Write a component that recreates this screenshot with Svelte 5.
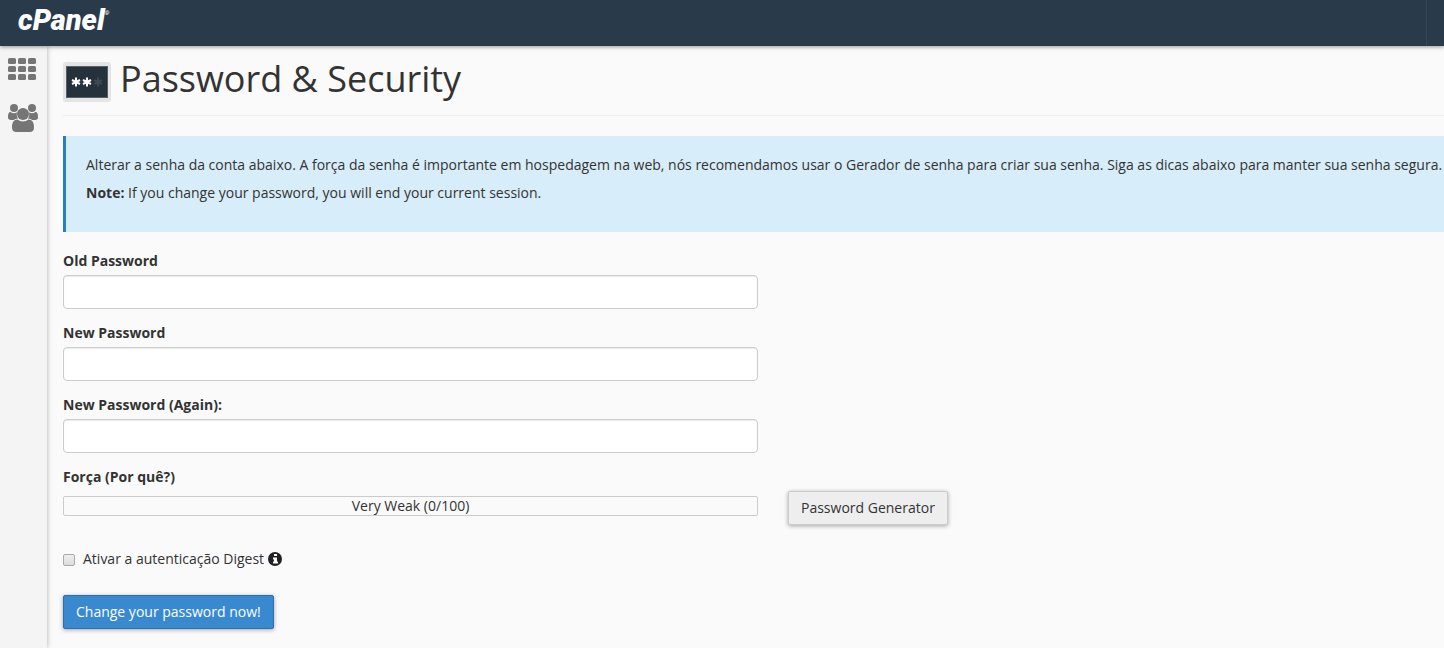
<script>
  let oldPassword = "";
  let newPassword = "";
  let newPasswordAgain = "";
  let digest = false;

  let strength = 0;
</script>

<div class="page">
  <header>
    <a class="logo" href="#home" aria-label="cPanel">cPanel<sup>®</sup></a>
    <div class="header-end"></div>
  </header>

  <div class="body">
    <nav>
      <a href="#home" aria-label="Home">
        <svg width="28" height="22" viewBox="0 0 28 22">
          {#each [0, 8, 16] as y}
            {#each [0, 10, 20] as x}
              <rect {x} {y} width="8" height="6" rx="1.5" />
            {/each}
          {/each}
        </svg>
      </a>
      <a href="#users" aria-label="Users">
        <svg width="30" height="28" viewBox="0 0 30 28">
          <circle cx="6" cy="4" r="4" />
          <circle cx="24" cy="4" r="4" />
          <path d="M2.5 8C4.500 9.500 7 9.500 9 8.300 8.300 11 9 13 10 14.500 8.200 14.700 6.700 15.200 5.800 16H3C1 16 0 15 0 13.200 0 10.500.5 8 2.500 8z" />
          <path d="M27.500 8C25.500 9.500 23 9.500 21 8.300 21.700 11 21 13 20 14.500 21.800 14.700 23.300 15.200 24.200 16H27C29 16 30 15 30 13.200 30 10.500 29.500 8 27.500 8z" />
          <circle cx="15" cy="10" r="6" />
          <path d="M9.500 15.500C12.500 18 17.500 18 20.500 15.500 25 15.500 26 19.500 26 23.500 26 26.500 24.500 28 21.500 28H8.500C5.500 28 4 26.500 4 23.500 4 19.500 5 15.500 9.500 15.500z" />
        </svg>
      </a>
    </nav>

    <main>
      <h1>
        <svg class="page-icon" width="48" height="40" viewBox="0 0 48 40">
          <rect width="48" height="40" rx="3" fill="#e4e4e4" />
          <rect x="3" y="4" width="42" height="32" fill="#55606a" />
          <rect x="4" y="5" width="40" height="30" fill="#25313b" />
          <g stroke-width="2">
            {#each [[13, "#fff"], [24, "#fff"], [35, "#3c4953"]] as [x, color]}
              <path
                stroke={color}
                d="M{x} 15.500v9M{x - 4} 18l8 4M{x + 4} 18l-8 4"
              />
            {/each}
          </g>
        </svg>
        <span>Password &amp; Security</span>
      </h1>

      <div class="callout">
        <p>
          Alterar a senha da conta abaixo. A força da senha é importante em
          hospedagem na web, nós recomendamos usar o Gerador de senha para criar
          sua senha. Siga as dicas abaixo para manter sua senha segura.
        </p>
        <p>
          <strong>Note:</strong> If you change your password, you will end your
          current session.
        </p>
      </div>

      <form on:submit|preventDefault>
        <div class="group">
          <label for="oldpass">Old Password</label>
          <input id="oldpass" type="password" bind:value={oldPassword} />
        </div>
        <div class="group">
          <label for="newpass">New Password</label>
          <input id="newpass" type="password" bind:value={newPassword} />
        </div>
        <div class="group">
          <label for="newpass2">New Password (Again):</label>
          <input id="newpass2" type="password" bind:value={newPasswordAgain} />
        </div>

        <div class="strength-label" id="strength-label">Força (Por quê?)</div>
        <div class="strength-row">
          <div
            class="strength"
            role="meter"
            aria-labelledby="strength-label"
            aria-valuemin="0"
            aria-valuemax="100"
            aria-valuenow={strength}
          >
            Very Weak ({strength}/100)
          </div>
          <button type="button" class="btn">Password Generator</button>
        </div>

        <div class="check">
          <input id="digest" type="checkbox" bind:checked={digest} />
          <label for="digest">Ativar a autenticação Digest</label>
          <svg width="14" height="14" viewBox="0 0 14 14" aria-hidden="true">
            <circle cx="7" cy="7" r="7" fill="#222" />
            <path d="M6 2h3v2H6zM5 5.500h4v4h1v2H5v-2h1v-2H5z" fill="#fff" />
          </svg>
        </div>

        <button type="submit" class="btn primary">
          Change your password now!
        </button>
      </form>
    </main>
  </div>
</div>

<style>
  :global(body) {
    margin: 0;
    background: #fafafa;
  }

  .page {
    display: flex;
    flex-direction: column;
    min-height: 100vh;
    font-family: "Open Sans", "Noto Sans", sans-serif;
    font-size: 14px;
    line-height: 20px;
    color: #333;
  }

  header {
    display: flex;
    justify-content: space-between;
    height: 46px;
    background: #293a4a;
    box-shadow: 0 1px 4px rgba(0, 0, 0, 0.4);
    z-index: 1;
  }
  .logo {
    padding-left: 18px;
    font: italic 900 29px/40px Roboto, sans-serif;
    color: #fff;
    text-decoration: none;
  }
  .logo sup {
    font-size: 6px;
    line-height: 6px;
    vertical-align: 15px;
  }
  .header-end {
    width: 17px;
    border-left: 1px solid #344757;
  }

  .body {
    display: flex;
    flex: 1;
  }
  nav {
    display: flex;
    flex-direction: column;
    gap: 24px;
    flex: none;
    width: 39px;
    padding: 12px 0 0 8px;
    background: #f4f4f4;
    box-shadow: 0 0 5px rgba(0, 0, 0, 0.3);
  }
  nav svg {
    display: block;
    fill: #757575;
  }

  main {
    flex: 1;
    min-width: 0;
    padding: 16px 0 16px 16px;
  }
  h1 {
    display: flex;
    gap: 9px;
    margin: 0 0 20px;
    padding-bottom: 13px;
    border-bottom: 1px solid #eee;
    font-size: 36px;
    line-height: 40px;
    font-weight: 400;
  }
  .page-icon {
    flex: none;
  }
  h1 span {
    margin-top: -3px;
    margin-bottom: 3px;
  }

  .callout {
    padding: 19px 0 21px 20px;
    border-left: 3px solid #2980b9;
    background: #d7edf9;
  }
  .callout p {
    margin: 0 0 8px;
  }

  form {
    padding-top: 19px;
  }
  .group {
    max-width: 695px;
    margin-bottom: 14px;
  }
  .group label,
  .strength-label {
    display: block;
    margin-bottom: 4px;
    font-weight: 700;
  }
  .group input {
    display: block;
    box-sizing: border-box;
    width: 100%;
    height: 34px;
    padding: 6px 12px;
    border: 1px solid #ccc;
    border-radius: 4px;
    background: #fff;
    box-shadow: inset 0 1px 1px rgba(0, 0, 0, 0.08);
    font: inherit;
  }

  .strength-row {
    display: flex;
    align-items: flex-start;
    gap: 30px;
  }
  .strength {
    box-sizing: border-box;
    flex: 0 1 695px;
    height: 20px;
    margin-top: 5px;
    border: 1px solid #ccc;
    border-radius: 2px;
    line-height: 18px;
    text-align: center;
  }

  .btn {
    padding: 6px 12px;
    border: 1px solid #ccc;
    border-radius: 2px;
    background: #eee;
    box-shadow: 0 1px 4px rgba(0, 0, 0, 0.35);
    font: inherit;
    color: #333;
    white-space: nowrap;
    cursor: pointer;
  }
  .primary {
    border-color: #2a6fb0;
    background: #3889cf;
    color: #fff;
  }

  .check {
    display: flex;
    align-items: center;
    margin: 24px 0 26px;
  }
  .check input {
    appearance: none;
    box-sizing: border-box;
    width: 12px;
    height: 12px;
    margin: 2px 8px 0 0;
    border: 1px solid #aaa;
    border-radius: 2px;
    background: linear-gradient(#eee, #ddd);
  }
  .check input:checked {
    background: #3889cf;
  }
  .check svg {
    margin-left: 4px;
  }
</style>
